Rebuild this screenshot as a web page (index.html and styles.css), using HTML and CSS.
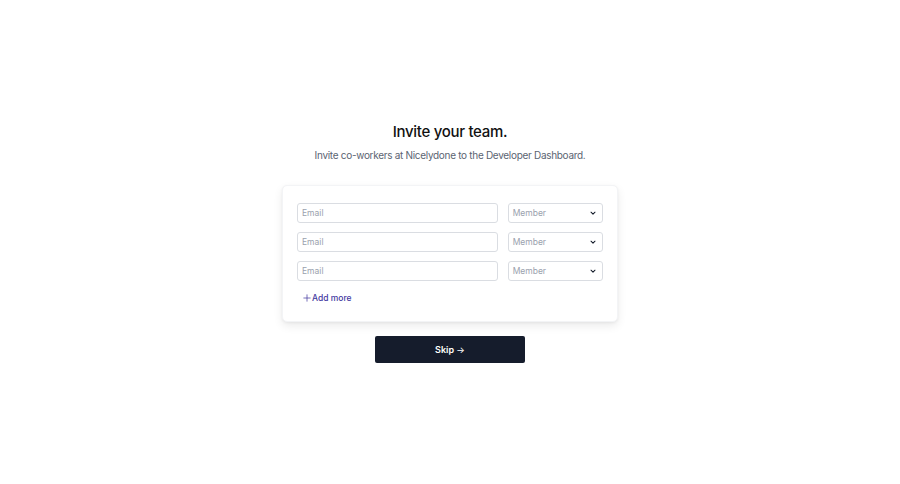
FILE: index.html
```html
<!DOCTYPE html>
<html>
<head>
    <title>Invite your team</title>
    <link rel="stylesheet" href="styles.css">
</head>
<body>
    <div id="main">
        <h1>Invite your team.</h1>
        <p class="subtitle">Invite co-workers at Nicelydone to the Developer Dashboard.</p>
        <div class="card">
            <div class="row">
                <input type="text" class="email" placeholder="Email">
                <div class="select">
                    <span>Member</span>
                    <svg width="8" height="8" viewBox="0 0 20 20" fill="none" stroke="#111827" stroke-width="2.6" stroke-linecap="round" stroke-linejoin="round"><path d="M5 8l5 5 5-5"/></svg>
                </div>
            </div>
            <div class="row">
                <input type="text" class="email" placeholder="Email">
                <div class="select">
                    <span>Member</span>
                    <svg width="8" height="8" viewBox="0 0 20 20" fill="none" stroke="#111827" stroke-width="2.6" stroke-linecap="round" stroke-linejoin="round"><path d="M5 8l5 5 5-5"/></svg>
                </div>
            </div>
            <div class="row">
                <input type="text" class="email" placeholder="Email">
                <div class="select">
                    <span>Member</span>
                    <svg width="8" height="8" viewBox="0 0 20 20" fill="none" stroke="#111827" stroke-width="2.6" stroke-linecap="round" stroke-linejoin="round"><path d="M5 8l5 5 5-5"/></svg>
                </div>
            </div>
            <button type="button" class="add-more">
                <svg width="8" height="8" viewBox="0 0 20 20" fill="none" stroke="currentColor" stroke-width="1.8" stroke-linecap="round"><path d="M10 2v16M2 10h16"/></svg>
                Add more
            </button>
        </div>
        <button type="button" class="skip">Skip <span class="arrow">&rarr;</span></button>
    </div>
</body>
</html>
```

FILE: styles.css
```css
body {
    font-family: Inter, 'Noto Sans', sans-serif;
    background: #fff;
    margin: 0;
    padding: 0;
}
#main {
    min-height: 100vh;
    display: flex;
    flex-direction: column;
    align-items: center;
    justify-content: center;
}
h1 {
    margin: 0;
    font-size: 15px;
    font-weight: 500;
    line-height: 20px;
    letter-spacing: -0.3px;
    color: #111;
}
.subtitle {
    margin: 5px 0 0;
    font-size: 10px;
    line-height: 16px;
    letter-spacing: -0.3px;
    color: #5b6472;
}
.card {
    margin-top: 22px;
    width: 336px;
    box-sizing: border-box;
    padding: 17px 14px 18px;
    background: #fff;
    border: 1px solid #f3f4f6;
    border-radius: 5px;
    box-shadow: 0 4px 10px rgba(0,0,0,0.08), 0 1px 3px rgba(0,0,0,0.05);
    display: flex;
    flex-direction: column;
    gap: 9px;
}
.row {
    display: flex;
    gap: 10px;
}
.email, .select {
    height: 20px;
    box-sizing: border-box;
    border: 1px solid #dadde2;
    border-radius: 3px;
    font-family: inherit;
    font-size: 8.5px;
    color: #111827;
    background: #fff;
}
.email {
    width: 202px;
    padding: 0 4px;
    outline: none;
}
.email::placeholder {
    color: #9aa1ad;
}
.select {
    width: 96px;
    padding: 0 4px;
    display: flex;
    align-items: center;
    justify-content: space-between;
    color: #9aa1ad;
}
.select svg {
    margin-right: 1px;
}
.add-more {
    align-self: flex-start;
    margin: 3px 0 0 6px;
    padding: 0;
    background: none;
    border: none;
    font-family: inherit;
    font-size: 8.5px;
    font-weight: 500;
    color: #4338a0;
    display: flex;
    align-items: center;
    gap: 1px;
    cursor: pointer;
}
.skip {
    margin-top: 14px;
    width: 150px;
    height: 27px;
    background: #151c2c;
    color: #fff;
    border: none;
    border-radius: 2px;
    font-family: inherit;
    font-size: 9px;
    font-weight: 600;
    cursor: pointer;
}
.arrow {
    font-weight: 400;
}
```
